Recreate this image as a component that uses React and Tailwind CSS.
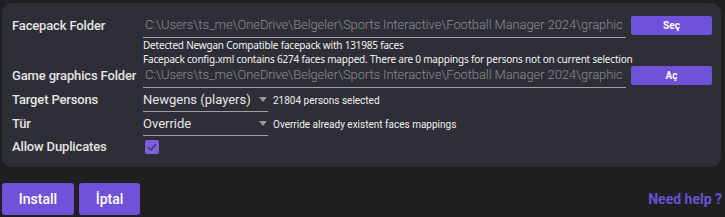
const PATH = "C:\\Users\\ts_me\\OneDrive\\Belgeler\\Sports Interactive\\Football Manager 2024\\graphic";

function Label({ children }) {
  return (
    <div className="w-[131px] shrink-0 text-[13px] font-medium tracking-[-0.15px] text-[#e4e4e4] whitespace-nowrap">
      {children}
    </div>
  );
}

function PathInput() {
  return (
    <div className="flex-1 min-w-0 h-full flex items-center border-b border-[#a0a0a0] overflow-hidden">
      <span className="pl-[2px] text-[13px] font-light tracking-[-0.1px] text-[#8c8c8c] whitespace-nowrap">{PATH}</span>
    </div>
  );
}

function SmallButton({ children }) {
  return (
    <button className="ml-[5px] w-[81px] h-[19px] shrink-0 rounded-[2px] bg-[#6e52d9] text-white text-[10px] font-bold">
      {children}
    </button>
  );
}

function Select({ value, note }) {
  return (
    <div className="flex items-center h-full">
      <div className="w-[125px] h-full flex items-center justify-between border-b border-[#a0a0a0]">
        <span className="text-[13px] text-[#e6e6e6] whitespace-nowrap">{value}</span>
        <svg width="8" height="5" viewBox="0 0 8 5" className="mr-[1px]">
          <path d="M0 0h8L4 5z" fill="#9a9a9a" />
        </svg>
      </div>
      <span className="ml-[5px] text-[10px] text-[#f0f0f0] whitespace-nowrap">{note}</span>
    </div>
  );
}

export default function App() {
  return (
    <div className="w-[725px] h-[217px] bg-[#202020] pt-[3px] px-[2px] font-['Roboto',sans-serif] overflow-hidden">
      <div className="w-[719px] rounded-[10px] bg-[#2e2e37] pt-[10px] pb-[9px] pl-[10px] pr-[9px]">
        <div className="flex items-center h-[25px]">
          <Label>Facepack Folder</Label>
          <PathInput />
          <SmallButton>Seç</SmallButton>
        </div>
        <div className="pl-[131px] text-[10px] leading-[14px] text-[#f2f2f2] font-['Noto_Sans',sans-serif] tracking-[-0.2px] whitespace-nowrap">
          <div>Detected Newgan Compatible facepack with 131985 faces</div>
          <div>Facepack config.xml contains 6274 faces mapped. There are 0 mappings for persons not on current selection</div>
        </div>
        <div className="flex items-center h-[25px] mt-[-3px]">
          <Label>Game graphics Folder</Label>
          <PathInput />
          <SmallButton>Aç</SmallButton>
        </div>
        <div className="flex items-center h-[24px]">
          <Label>Target Persons</Label>
          <Select value="Newgens (players)" note="21804 persons selected" />
        </div>
        <div className="flex items-center h-[24px]">
          <Label>Tür</Label>
          <Select value="Override" note="Override already existent faces mappings" />
        </div>
        <div className="flex items-center h-[22px]">
          <Label>Allow Duplicates</Label>
          <div className="ml-[2px] w-[14px] h-[14px] rounded-[2px] bg-[#7d5fd9] flex items-center justify-center">
            <svg width="10" height="8" viewBox="0 0 10 8">
              <path d="M1 4l3 3 5-6" fill="none" stroke="#3d3470" strokeWidth="1.4" />
            </svg>
          </div>
        </div>
      </div>
      <div className="flex items-center mt-[16px]">
        <button className="w-[72px] h-[32px] rounded-[3px] bg-[#6e52d9] text-white text-[14px] font-medium">Install</button>
        <button className="ml-[5px] w-[61px] h-[32px] rounded-[3px] bg-[#6e52d9] text-white text-[14px] font-medium">İptal</button>
        <div className="ml-auto mr-[1px] text-[14px] font-bold text-[#6a50d2]">Need help ?</div>
      </div>
    </div>
  );
}
